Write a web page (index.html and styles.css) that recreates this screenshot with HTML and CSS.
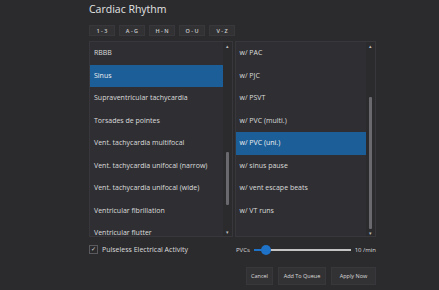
FILE: index.html
```html
<!DOCTYPE html>
<html lang="en">
<head>
    <meta charset="UTF-8">
    <title>Cardiac Rhythm</title>
    <link rel="stylesheet" href="styles.css">
</head>
<body>
    <div class="dialog">
        <h1 class="title">Cardiac Rhythm</h1>

        <div class="filters">
            <button class="filter">1 - 3</button>
            <button class="filter">A - G</button>
            <button class="filter">H - N</button>
            <button class="filter">O - U</button>
            <button class="filter">V - Z</button>
        </div>

        <div class="lists">
            <div class="list list-left">
                <ul class="items">
                    <li>RBBB</li>
                    <li class="selected">Sinus</li>
                    <li>Supraventricular tachycardia</li>
                    <li>Torsades de pointes</li>
                    <li>Vent. tachycardia multifocal</li>
                    <li>Vent. tachycardia unifocal (narrow)</li>
                    <li>Vent. tachycardia unifocal (wide)</li>
                    <li>Ventricular fibrillation</li>
                    <li>Ventricular flutter</li>
                </ul>
                <div class="scrollbar">
                    <span class="arrow">&#9652;</span>
                    <div class="track"><div class="thumb thumb-left"></div></div>
                    <span class="arrow">&#9662;</span>
                </div>
            </div>

            <div class="list list-right">
                <ul class="items">
                    <li>w/ PAC</li>
                    <li>w/ PJC</li>
                    <li>w/ PSVT</li>
                    <li>w/ PVC (multi.)</li>
                    <li class="selected">w/ PVC (uni.)</li>
                    <li>w/ sinus pause</li>
                    <li>w/ vent escape beats</li>
                    <li>w/ VT runs</li>
                </ul>
                <div class="scrollbar">
                    <span class="arrow">&#9652;</span>
                    <div class="track"><div class="thumb thumb-right"></div></div>
                    <span class="arrow">&#9662;</span>
                </div>
            </div>
        </div>

        <div class="options">
            <label class="check">
                <span class="box">&#10003;</span>
                Pulseless Electrical Activity
            </label>
            <div class="rate">
                <span class="rate-label">PVCs</span>
                <div class="slider">
                    <div class="slider-fill"></div>
                    <div class="slider-knob"></div>
                </div>
                <span class="rate-value">10 /min</span>
            </div>
        </div>

        <div class="actions">
            <button class="action cancel">Cancel</button>
            <button class="action queue">Add To Queue</button>
            <button class="action apply">Apply Now</button>
        </div>
    </div>
</body>
</html>
```

FILE: styles.css
```css
body {
    margin: 0;
    background: #2b2b2e;
    color: #dcdcdc;
    font-family: "Open Sans", "Noto Sans", sans-serif;
    font-size: 7px;
}
.dialog {
    padding: 0 0 0 89px;
    width: 287px;
}
.title {
    margin: 0;
    height: 25px;
    font-size: 10.5px;
    font-weight: normal;
    line-height: 18px;
    color: #e4e4e4;
}
.filters {
    display: flex;
    gap: 4px;
    height: 12px;
}
.filter {
    width: 26px;
    height: 11px;
    padding: 0;
    background: #323235;
    border: 1px solid #38383c;
    color: #cfcfcf;
    font-family: inherit;
    font-size: 5.5px;
    font-weight: 600;
}
.lists {
    display: flex;
    gap: 2px;
    margin-top: 4px;
}
.list {
    display: flex;
    height: 194px;
    overflow: hidden;
    background: #2f2f33;
    border: 1px solid #38383c;
}
.list-left {
    width: 142px;
}
.list-right {
    width: 140px;
}
.items {
    flex: 1;
    margin: 0;
    padding: 0;
    list-style: none;
}
.items li {
    height: 22.5px;
    line-height: 22.5px;
    padding-left: 4px;
    white-space: nowrap;
}
.items li.selected {
    background: #1b5e98;
    color: #f0f0f0;
}
.scrollbar {
    display: flex;
    flex-direction: column;
    align-items: center;
    width: 9px;
    background: #2b2b2e;
}
.arrow {
    height: 8px;
    line-height: 8px;
    font-size: 5px;
    color: #bdbdbd;
}
.track {
    flex: 1;
    width: 3px;
}
.thumb {
    width: 3px;
    background: #6a6a6e;
    border-radius: 1px;
}
.thumb-left {
    margin-top: 102px;
    height: 53px;
}
.thumb-right {
    margin-top: 47px;
    height: 132px;
}
.options {
    display: flex;
    align-items: center;
    height: 25px;
}
.check {
    display: flex;
    align-items: center;
    gap: 4px;
    width: 147px;
}
.box {
    width: 7px;
    height: 7px;
    border: 1px solid #5a5a5e;
    font-size: 6px;
    line-height: 7px;
    text-align: center;
}
.rate {
    display: flex;
    align-items: center;
    gap: 4px;
    flex: 1;
}
.rate-label {
    font-size: 6px;
}
.slider {
    position: relative;
    flex: 1;
    height: 2px;
    background: #c4c4c4;
}
.slider-fill {
    width: 12px;
    height: 2px;
    background: #1e72c8;
}
.slider-knob {
    position: absolute;
    left: 7px;
    top: -4px;
    width: 10px;
    height: 10px;
    border-radius: 50%;
    background: #1e72c8;
}
.rate-value {
    font-size: 6px;
}
.actions {
    display: flex;
    justify-content: flex-end;
    gap: 5px;
    margin-top: 5px;
}
.action {
    height: 18px;
    padding: 0;
    background: #323235;
    border: 1px solid #38383c;
    color: #dcdcdc;
    font-family: inherit;
    font-size: 5.5px;
}
.cancel {
    width: 27px;
}
.queue {
    width: 48px;
}
.apply {
    width: 45px;
}
```
